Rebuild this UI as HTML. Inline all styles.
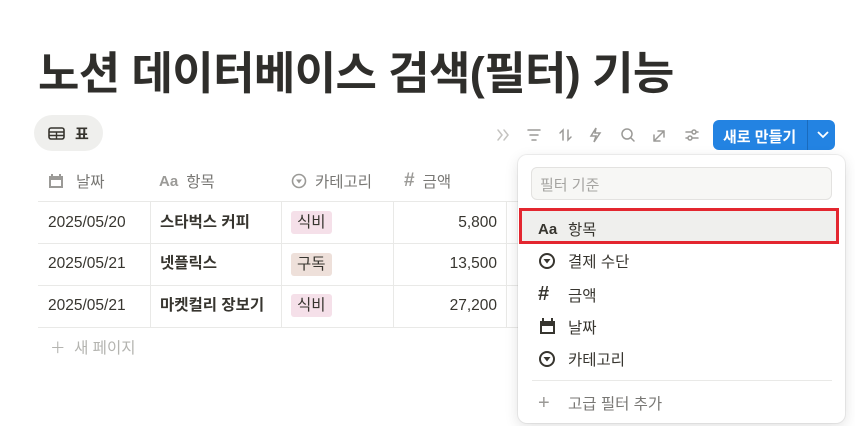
<!DOCTYPE html>
<html><head><meta charset="utf-8"><style>
*{margin:0;padding:0;box-sizing:border-box}
body{width:855px;height:426px;overflow:hidden;background:#fff;font-family:"Liberation Sans","Noto Sans CJK KR",sans-serif;color:#37352f;position:relative}
.abs{position:absolute}
h1{position:absolute;left:38px;top:37px;font-size:45px;font-weight:700;color:#2f2e2b;letter-spacing:-0.6px;white-space:nowrap}
.tab{left:34px;top:115px;width:69px;height:36px;border-radius:18px;background:#efefed;font-size:15px;font-weight:700}
.hd{top:170px;font-size:15.5px;color:#787774;display:flex;align-items:center;gap:8px}
.cell{font-size:15.5px;position:absolute;line-height:20px}
.num{position:absolute;right:358px;font-size:15.5px;line-height:20px}
.hl{position:absolute;left:38px;width:480px;height:1px;background:#e9e9e7}
.vl{position:absolute;width:1px;background:#e9e9e7;top:201px;height:126px}
.tag{position:absolute;height:23px;padding:0 6px;border-radius:3px;font-size:15.5px;line-height:23px}
.panel{left:518px;top:155px;width:327px;height:268px;background:#fff;border-radius:9px;box-shadow:0 0 0 1px rgba(15,15,15,.06),0 4px 14px rgba(15,15,15,.12)}
.item{position:absolute;left:20px;font-size:15.5px;display:flex;align-items:center;gap:10px;color:#37352f}
</style></head><body>
<h1>노션 데이터베이스 검색(필터) 기능</h1>
<div class="abs tab"><svg class="abs" style="left:14px;top:12px" width="17" height="13" viewBox="0 0 17 13"><rect x="1" y="1" width="15" height="11" rx="2" fill="none" stroke="#37352f" stroke-width="1.6"/><path d="M1 5H16M1 8.5H16M8.5 5V12" stroke="#37352f" stroke-width="1.4"/></svg><span class="abs" style="left:41px;top:8px">표</span></div>
<svg class="abs" style="left:495px;top:125px" width="210" height="20" viewBox="0 0 210 20" fill="none" stroke="#9b9a97" stroke-width="1.5" stroke-linecap="round">
<path d="M3 5l4 5-4 5M9 5l4 5-4 5" stroke="#c4c3c0"/>
<path d="M33 5h12M35 10h8M37 15h4" />
<path d="M68 15V5l-3 3M73 5v10l3-3"/>
<path d="M101 3l-5 8h5l-2 6 6-9h-5z"/>
<circle cx="132" cy="9" r="5"/><path d="M136 13l3 3"/>
<path d="M159 16l10-10M163 6h6v6M159 10v6h6"/>
<path d="M191 7h12M191 13h12"/><circle cx="199" cy="7" r="2" fill="#fff"/><circle cx="195" cy="13" r="2" fill="#fff"/>
</svg>
<div class="abs" style="left:713px;top:120px;width:122px;height:30px;background:#2383e2;border-radius:6px;color:#fff;font-size:15px;font-weight:700"><span class="abs" style="left:10px;top:6px">새로 만들기</span><div class="abs" style="left:94px;top:0;width:1px;height:30px;background:#1a6bbd"></div><svg class="abs" style="left:103px;top:10px" width="14" height="10"><path d="M2 2l5 5 5-5" fill="none" stroke="#fff" stroke-width="1.8"/></svg></div>
<div class="abs hd" style="left:48px"><svg width="16" height="16"><rect x="1" y="3" width="14" height="12" fill="#9b9a97"/><rect x="3" y="7" width="10" height="6" fill="#fff"/><path d="M4 1v3M12 1v3" stroke="#9b9a97" stroke-width="2"/></svg><span style="margin-left:4px">날짜</span></div>
<div class="abs hd" style="left:159px"><b style="font-size:15px;color:#9b9a97">Aa</b><span>항목</span></div>
<div class="abs hd" style="left:291px"><svg width="16" height="16"><circle cx="8" cy="8" r="6.5" fill="none" stroke="#9b9a97" stroke-width="1.6"/><path d="M5 6.5h6l-3 4z" fill="#9b9a97"/></svg><span>카테고리</span></div>
<div class="abs hd" style="left:404px"><b style="font-size:19px;color:#9b9a97">#</b><span>금액</span></div>
<div class="hl" style="top:201px"></div><div class="hl" style="top:243px"></div><div class="hl" style="top:285px"></div><div class="hl" style="top:327px"></div>
<div class="vl" style="left:150px"></div><div class="vl" style="left:281px"></div><div class="vl" style="left:393px"></div><div class="vl" style="left:506px"></div>
<div class="cell" style="left:48px;top:213px">2025/05/20</div><div class="cell" style="left:160px;top:213px;font-weight:700">스타벅스 커피</div><div class="tag" style="left:291px;top:211px;background:#f5e0e9">식비</div><div class="num" style="top:213px">5,800</div>
<div class="cell" style="left:48px;top:254px">2025/05/21</div><div class="cell" style="left:160px;top:254px;font-weight:700">넷플릭스</div><div class="tag" style="left:291px;top:253px;background:#eee0da">구독</div><div class="num" style="top:254px">13,500</div>
<div class="cell" style="left:48px;top:296px">2025/05/21</div><div class="cell" style="left:160px;top:296px;font-weight:700">마켓컬리 장보기</div><div class="tag" style="left:291px;top:294px;background:#f5e0e9">식비</div><div class="num" style="top:296px">27,200</div>
<div class="cell" style="left:50px;top:339px;color:#b4b4b0">＋&nbsp; 새 페이지</div>
<div class="abs panel">
<div class="abs" style="left:13px;top:12px;width:301px;height:33px;background:#f7f7f5;border:1px solid #e3e2e0;border-radius:6px;font-size:15px;color:#a5a4a1;padding:6px 8px">필터 기준</div>
<div class="abs" style="left:1px;top:53px;width:320px;height:36px;border:3px solid #e3262f;background:#efefed"></div>
<div class="item" style="top:63px"><b style="width:20px;font-size:15px">Aa</b>항목</div>
<div class="item" style="top:95px"><svg width="20" height="18"><circle cx="9" cy="9" r="7" fill="none" stroke="#37352f" stroke-width="2"/><path d="M5.5 7h7l-3.5 4.5z" fill="#37352f"/></svg>결제 수단</div>
<div class="item" style="top:128px"><b style="width:20px;font-size:20px">#</b>금액</div>
<div class="item" style="top:161px"><svg width="20" height="18"><rect x="2" y="3" width="15" height="13" fill="#37352f"/><rect x="4" y="8" width="11" height="6" fill="#fff"/><path d="M5 0v4M14 0v4" stroke="#37352f" stroke-width="2"/></svg>날짜</div>
<div class="item" style="top:193px"><svg width="20" height="18"><circle cx="9" cy="9" r="7" fill="none" stroke="#37352f" stroke-width="2"/><path d="M5.5 7h7l-3.5 4.5z" fill="#37352f"/></svg>카테고리</div>
<div class="abs" style="left:14px;top:225px;width:300px;height:1px;background:#e9e9e7"></div>
<div class="item" style="top:237px;color:#787774"><span style="width:20px;font-size:20px;color:#9b9a97;line-height:1">+</span>고급 필터 추가</div>
</div>
</body></html>
